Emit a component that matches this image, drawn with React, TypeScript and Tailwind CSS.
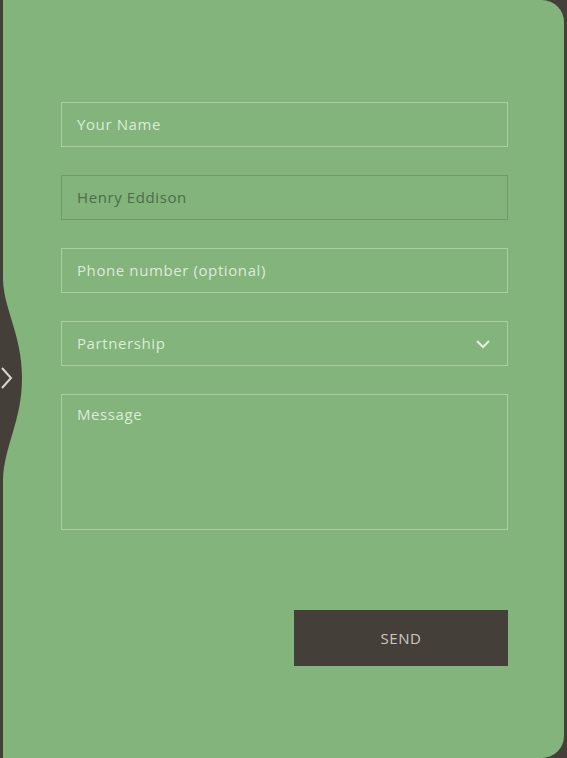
import React from "react";

const font = { fontFamily: '"Open Sans", "Liberation Sans", sans-serif' };

function Field({ label, dark }: { label: string; dark?: boolean }) {
  return (
    <div
      className={
        "h-[45px] flex items-center px-[15px] border " +
        (dark ? "border-[#6f9a68] text-[#4d6e48]" : "border-[#a9cfa2] text-[#dcecd7]")
      }
    >
      <span className="text-[15px] tracking-[0.6px]">{label}</span>
    </div>
  );
}

export default function App() {
  return (
    <div className="w-[567px] h-[758px] bg-[#453f3a] relative overflow-hidden" style={font}>
      <div className="ml-[3px] mr-[3px] h-[758px] bg-[#82b47b] rounded-r-[22px] pt-[102px] pl-[58px] pr-[56px]">
        <div className="flex flex-col gap-[28px]">
          <Field label="Your Name" />
          <Field label="Henry Eddison" dark />
          <Field label="Phone number (optional)" />
          <div className="h-[45px] flex items-center justify-between px-[15px] border border-[#a9cfa2] text-[#dcecd7]">
            <span className="text-[15px] tracking-[0.6px]">Partnership</span>
            <svg width="16" height="10" viewBox="0 0 16 10" className="mr-[1px]">
              <path d="M2 2 L8 8 L14 2" fill="none" stroke="#e4f0e0" strokeWidth="2" />
            </svg>
          </div>
          <div className="h-[136px] border border-[#a9cfa2] text-[#dcecd7] px-[15px] pt-[7px]">
            <span className="text-[15px] tracking-[0.6px]">Message</span>
          </div>
        </div>
        <div className="flex justify-end mt-[80px]">
          <button className="w-[214px] h-[56px] bg-[#453f3a] text-[#cdc8c3] text-[15px] tracking-[0.6px] flex items-center justify-center">
            SEND
          </button>
        </div>
      </div>
      <svg className="absolute left-0 top-[280px]" width="26" height="200" viewBox="0 0 26 200">
        <path d="M0 0 L3 0 C4 30 22 55 22 98 C22 141 4 166 3 200 L0 200 Z" fill="#453f3a" />
        <path d="M2 88 L11 98 L2 108" fill="none" stroke="#ddd6cf" strokeWidth="2" />
      </svg>
    </div>
  );
}
